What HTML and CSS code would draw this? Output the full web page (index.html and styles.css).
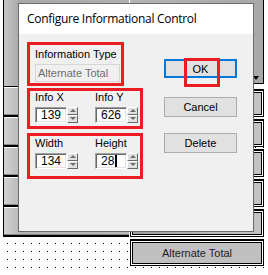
FILE: index.html
```html
<!DOCTYPE html>
<html lang="en">
<head>
    <meta charset="UTF-8">
    <title>Configure Informational Control</title>
    <link rel="stylesheet" href="styles.css">
</head>
<body>
    <!-- designer canvas behind the dialog -->
    <div class="canvas">
        <div class="col col-left">
            <div class="panel panel-left"></div>
            <div class="ctl ctl-left"></div>
            <div class="ctl ctl-left"></div>
            <div class="ctl ctl-left"></div>
            <div class="ctl ctl-left"></div>
            <div class="ctl ctl-left ctl-118">118</div>
        </div>
        <div class="col col-right">
            <div class="panel panel-right"><span class="drop-arrow"></span></div>
            <div class="ctl ctl-right"></div>
            <div class="ctl ctl-right"></div>
            <div class="ctl ctl-right"></div>
            <div class="ctl ctl-right"></div>
            <div class="ctl ctl-right"></div>
            <div class="ctl ctl-right ctl-total">Alternate Total</div>
        </div>
    </div>

    <div class="dialog">
        <div class="dlg-title">Configure Informational Control</div>
        <div class="dlg-body">
            <div class="dlg-fields">
                <div class="mark mark-type">
                    <div class="lbl">Information Type</div>
                    <div class="field field-disabled">Alternate Total</div>
                </div>
                <div class="mark mark-pair mark-pos">
                    <div class="spin-group">
                        <div class="lbl">Info X</div>
                        <div class="spin">
                            <div class="field">139</div>
                            <div class="arrows"><span class="arr up"></span><span class="arr down"></span></div>
                        </div>
                    </div>
                    <div class="spin-group">
                        <div class="lbl">Info Y</div>
                        <div class="spin">
                            <div class="field">626</div>
                            <div class="arrows"><span class="arr up"></span><span class="arr down"></span></div>
                        </div>
                    </div>
                </div>
                <div class="mark mark-pair mark-size">
                    <div class="spin-group">
                        <div class="lbl">Width</div>
                        <div class="spin">
                            <div class="field">134</div>
                            <div class="arrows"><span class="arr up"></span><span class="arr down"></span></div>
                        </div>
                    </div>
                    <div class="spin-group">
                        <div class="lbl">Height</div>
                        <div class="spin">
                            <div class="field">28<span class="caret"></span></div>
                            <div class="arrows"><span class="arr up"></span><span class="arr down"></span></div>
                        </div>
                    </div>
                </div>
            </div>
            <div class="dlg-buttons">
                <button class="btn btn-ok">OK</button>
                <button class="btn btn-cancel">Cancel</button>
                <button class="btn btn-delete">Delete</button>
            </div>
        </div>
    </div>
</body>
</html>
```

FILE: styles.css
```css
* {
    margin: 0;
    padding: 0;
    box-sizing: border-box;
}

html, body {
    width: 268px;
    height: 275px;
    overflow: hidden;
}

body {
    position: relative;
    font-family: "Liberation Sans", Arial, sans-serif;
    font-size: 11px;
    color: #000;
    background-color: #fff;
    background-image: conic-gradient(from 270deg at 1px 1px, #000 90deg, transparent 0);
    background-size: 8px 8px;
    background-position: 7px 3px;
}

/* ---- canvas ---- */

.canvas {
    display: flex;
    gap: 1px;
    padding-left: 3px;
}

.col {
    display: flex;
    flex-direction: column;
}

.col-left {
    width: 126px;
}

.col-right {
    width: 134px;
}

.panel {
    position: relative;
    background: linear-gradient(90deg, #c6c6c6, #a9a9a9 12%, #b0b0b0);
    border-left: 1px solid #000;
}

.panel-left {
    height: 87px;
    border-bottom: 1px solid #000;
}

.panel-right {
    height: 84px;
    border-right: 1px solid #000;
    border-left: none;
    background: linear-gradient(90deg, #b4b4b4, #a8a8a8);
    border-bottom: 1px solid #000;
    margin-bottom: 5px;
}

.drop-arrow {
    position: absolute;
    right: 4px;
    bottom: 3px;
    width: 0;
    height: 0;
    border-left: 3px solid transparent;
    border-right: 3px solid transparent;
    border-top: 4px solid #000;
}

.ctl {
    background: linear-gradient(90deg, #d2d2d2, #b3b3b3 15%, #b9b9b9);
    border: 1px solid #000;
    box-shadow: inset 0 1px 0 #fff, inset 0 -1px 0 #8a8a8a;
}

.ctl-left {
    height: 30px;
    border-right: none;
    border-top: none;
    border-bottom-width: 2px;
}

.ctl-118 {
    display: flex;
    align-items: flex-end;
    justify-content: center;
    padding-bottom: 2px;
    color: #2a1a5e;
}

.ctl-right {
    height: 28px;
    margin-bottom: 2px;
    border-top-width: 2px;
    box-shadow: inset 0 0 0 1px #fff, inset 0 0 0 2px #000;
    background: linear-gradient(90deg, #9c9c9c, #b9b9b9 60%, #c3c3c3);
}

.ctl-total {
    height: 27px;
    display: flex;
    align-items: center;
    justify-content: center;
    color: #222;
    background: #c0c0c0;
    box-shadow: inset 0 0 0 1px #fff, inset 0 0 0 2px #000, inset -2px -2px 0 #999;
}

/* ---- dialog ---- */

.dialog {
    position: absolute;
    left: 18px;
    top: 3px;
    width: 236px;
    height: 229px;
    border: 1px solid #6b6b6b;
    background: #f0f0f0;
    display: flex;
    flex-direction: column;
}

.dlg-title {
    height: 30px;
    background: #fff;
    padding: 6px 0 0 8px;
    font-family: "Open Sans", "Noto Sans", sans-serif;
    font-size: 12px;
    letter-spacing: -0.3px;
    color: #000;
}

.dlg-body {
    display: flex;
    padding: 8px 0 0 8px;
}

.dlg-fields {
    width: 116px;
    display: flex;
    flex-direction: column;
}

.mark {
    border: 3px solid #ed1c24;
    padding-left: 5px;
}

.mark-type {
    width: 97px;
    height: 44px;
    padding-top: 3px;
}

.mark-pair {
    display: flex;
    gap: 17px;
}

.mark-pos {
    height: 41px;
    margin-top: 2px;
}

.mark-size {
    height: 46px;
    margin-top: 4px;
    padding-top: 1px;
}

.lbl {
    line-height: 13px;
    white-space: nowrap;
}

.field {
    height: 16px;
    background: #fff;
    border: 1px solid;
    border-color: #a0a0a0 #fff #fff #a0a0a0;
    box-shadow: inset 1px 1px 0 #696969, inset -1px -1px 0 #e3e3e3;
    padding-left: 5px;
    font-size: 12px;
    line-height: 14px;
    white-space: nowrap;
}

.field-disabled {
    width: 85px;
    height: 18px;
    margin-top: 3px;
    background: #f0f0f0;
    border: 1px solid #d6d6d6;
    box-shadow: none;
    color: #6d6d6d;
    font-size: 11px;
    line-height: 16px;
    padding-left: 2px;
}

.spin-group .lbl {
    margin-bottom: 3px;
}

.spin {
    display: flex;
}

.spin .field {
    width: 32px;
}

.caret {
    display: inline-block;
    width: 2px;
    height: 12px;
    background: #000;
    vertical-align: -2px;
    margin-left: 1px;
}

.arrows {
    width: 11px;
    height: 16px;
    display: flex;
    flex-direction: column;
}

.arr {
    position: relative;
    flex: 1;
    background: #e1e1e1;
    border: 1px solid;
    border-color: #fff #696969 #696969 #fff;
}

.arr::after {
    content: "";
    position: absolute;
    left: 2px;
    top: 1px;
    border-left: 3px solid transparent;
    border-right: 3px solid transparent;
}

.arr.up::after {
    border-bottom: 3px solid #6d6d6d;
}

.arr.down::after {
    border-top: 3px solid #6d6d6d;
}

.dlg-buttons {
    margin-left: 21px;
    display: flex;
    flex-direction: column;
}

.btn {
    position: relative;
    width: 73px;
    height: 20px;
    background: #e1e1e1;
    border: 1px solid #adadad;
    font-family: "Liberation Sans", Arial, sans-serif;
    font-size: 11px;
    color: #000;
}

.btn-ok {
    margin-top: 17px;
    height: 19px;
    border: 2px solid #0078d7;
}

.btn-ok::after {
    content: "";
    position: absolute;
    left: 18px;
    top: -3px;
    width: 30px;
    height: 23px;
    border: 3px solid #ed1c24;
}

.btn-cancel {
    margin-top: 19px;
}

.btn-delete {
    margin-top: 16px;
}
```
